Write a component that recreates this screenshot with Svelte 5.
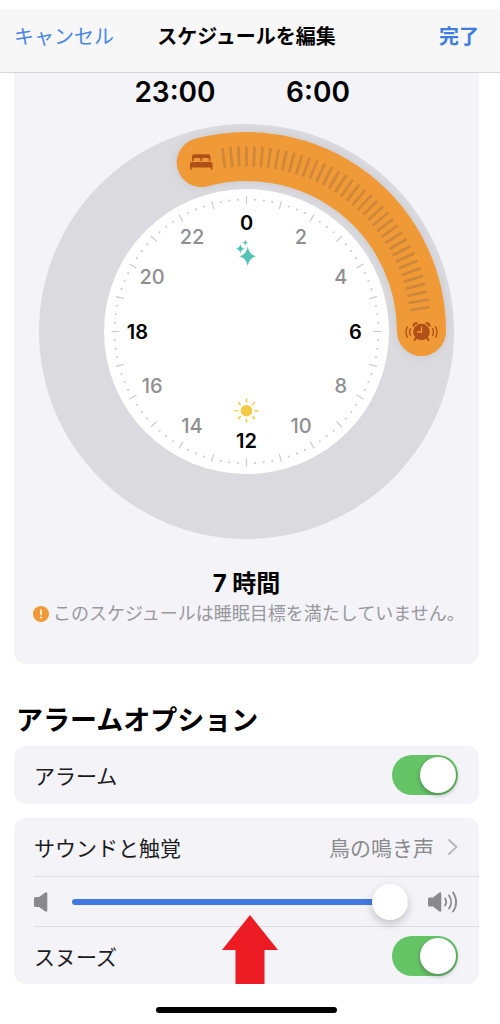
<script lang="ts">
  const C = 207.5;

  function polar(r: number, deg: number) {
    const a = (deg * Math.PI) / 180;
    return { x: C + r * Math.sin(a), y: C - r * Math.cos(a) };
  }

  function tick(inner: number, outer: number, deg: number) {
    const a = polar(inner, deg);
    const b = polar(outer, deg);
    return { x1: a.x, y1: a.y, x2: b.x, y2: b.y };
  }

  function star(x: number, y: number, w: number, h: number) {
    const k = 0.17;
    return `M${x} ${y - h}Q${x + w * k} ${y - h * k} ${x + w} ${y}Q${x + w * k} ${y + h * k} ${x} ${y + h}Q${x - w * k} ${y + h * k} ${x - w} ${y}Q${x - w * k} ${y - h * k} ${x} ${y - h}Z`;
  }

  const hours = Array.from({ length: 12 }, (_, i) => ({ value: i * 2, ...polar(109, i * 30) }));
  const marks = Array.from({ length: 24 }, (_, i) => tick(127, 135, i * 15));
  const dots = Array.from({ length: 96 }, (_, i) => i)
    .filter((i) => i % 4 !== 0)
    .map((i) => polar(132, i * 3.75));
  const grip = Array.from({ length: 37 }, (_, i) => tick(166, 184, -7.5 + i * 2.5));
  const rays = Array.from({ length: 8 }, (_, i) => i * 45);

  const from = polar(175, -15);
  const to = polar(175, 90);

  let alarm = $state(true);
  let snooze = $state(true);
  let volume = $state(100);
</script>

<header class="bar">
  <button class="link">キャンセル</button>
  <h1>スケジュールを編集</h1>
  <button class="link done">完了</button>
</header>

<main>
  <section class="schedule">
    <div class="times">
      <time>23:00</time>
      <time>6:00</time>
    </div>

    <svg class="dial" viewBox="0 0 415 415" role="img" aria-label="23:00 – 6:00">
      <circle cx={C} cy={C} r="207.5" fill="#dadadf" />
      <circle cx={C} cy={C} r="142.5" fill="#fff" />
      <path class="sleep" d="M{from.x} {from.y}A175 175 0 0 1 {to.x} {to.y}" />

      <g stroke="#d0873a" stroke-width="2.8" stroke-linecap="round">
        {#each grip as t}
          <line {...t} />
        {/each}
      </g>
      <g stroke="#cbcbcd" stroke-width="1.2">
        {#each marks as t}
          <line {...t} />
        {/each}
      </g>
      <g fill="#cfcfd2">
        {#each dots as d}
          <circle cx={d.x} cy={d.y} r="1.1" />
        {/each}
      </g>

      {#each hours as h}
        <text class="hour" class:main={h.value % 6 === 0} x={h.x} y={h.y + 7}>{h.value}</text>
      {/each}

      <!-- bed -->
      <g fill="#b04f16">
        <path d="M153 37v-4.500a2.200 2.200 0 0 1 2.200-2.200h14a2.200 2.200 0 0 1 2.200 2.200v4.500h-1.600v-1.600a1.300 1.300 0 0 0-1.300-1.300h-4.200a1.300 1.300 0 0 0-1.300 1.300v1.600h-1.600v-1.600a1.300 1.300 0 0 0-1.300-1.300h-4.200a1.300 1.300 0 0 0-1.300 1.300v1.600z" />
        <path d="M151 45.500v-5.500a2 2 0 0 1 2-2h18.500a2 2 0 0 1 2 2v5.500h-1.800v-2h-18.900v2z" />
      </g>

      <!-- alarm clock -->
      <g transform="translate(382.5 208)" fill="none" stroke="#b04f16" stroke-linecap="round">
        <circle r="8.300" fill="#b04f16" stroke="none" />
        <path d="M-8-6.200a3 3 0 0 1 3.200-2.600M8-6.200a3 3 0 0 0-3.200-2.600M-5.500 6.200l-1.500 1.800M5.500 6.200l1.500 1.800" stroke-width="2" />
        <path d="M0-5v5h-4" stroke="#f09a37" stroke-width="1.300" />
        <path d="M-11-3.500a7 7 0 0 0 0 7M11-3.500a7 7 0 0 1 0 7M-14-5.200a10 10 0 0 0 0 10.400M14-5.200a10 10 0 0 1 0 10.400" stroke-width="1.300" />
      </g>

      <!-- sparkles -->
      <path fill="#52c3b4" d={star(208.7, 132.3, 8.5, 9.5)} />
      <path fill="#52c3b4" d={star(201.3, 124.7, 4.5, 4.5)} />
      <path fill="#52c3b4" d={star(206.3, 118.7, 2.6, 2.6)} />

      <!-- sun -->
      <g transform="translate(207.5 286.7)">
        <circle r="5.800" fill="#f5ca45" />
        {#each rays as r}
          <line y1="-8.800" y2="-11.300" stroke="#f5ca45" stroke-width="1.600" stroke-linecap="round" transform="rotate({r})" />
        {/each}
      </g>
    </svg>

    <p class="total">7 時間</p>
    <p class="warning">
      <svg width="16" height="16" viewBox="0 0 16 16" aria-hidden="true">
        <circle cx="8" cy="8" r="8" fill="#f09a37" />
        <path d="M8 4v4.500" stroke="#fff" stroke-width="1.600" stroke-linecap="round" />
        <circle cx="8" cy="11.500" r="1" fill="#fff" />
      </svg>
      <span>このスケジュールは睡眠目標を満たしていません。</span>
    </p>
  </section>

  <h2>アラームオプション</h2>

  <section class="group">
    <label class="row">
      <span>アラーム</span>
      <input class="toggle" type="checkbox" role="switch" bind:checked={alarm} />
    </label>
  </section>

  <section class="group">
    <button class="row sound">
      <span>サウンドと触覚</span>
      <span class="value">鳥の鳴き声</span>
      <svg width="10" height="18" viewBox="0 0 10 18" fill="none" stroke="#b9b9be" stroke-width="2" stroke-linecap="round" stroke-linejoin="round" aria-hidden="true">
        <path d="M1 2l7.500 7L1 16" />
      </svg>
    </button>
    <div class="row volume">
      <svg width="14" height="20" viewBox="0 0 14 20" fill="#8a8a8e" aria-hidden="true">
        <path d="M1.500 5H5L11 .8q2.300-1.200 2.300 .8v16.800q0 2-2.300 .8L5 15H1.500Q0 15 0 13.500V6.500Q0 5 1.500 5z" />
      </svg>
      <input type="range" min="0" max="100" aria-label="音量" bind:value={volume} />
      <svg width="30" height="22" viewBox="0 0 30 22" aria-hidden="true">
        <path fill="#8a8a8e" d="M1.500 6.500H5L11 1.800q2.300-1.200 2.300 .8v16.800q0 2-2.300 .8L5 15.500H1.500Q0 15.500 0 14V8Q0 6.500 1.500 6.500z" />
        <path d="M17 7.500a6 6 0 0 1 0 7M21 4.500a11 11 0 0 1 0 13M25 1.500a16 16 0 0 1 0 19" fill="none" stroke="#8a8a8e" stroke-width="1.800" stroke-linecap="round" />
      </svg>
    </div>
    <label class="row">
      <span>スヌーズ</span>
      <input class="toggle" type="checkbox" role="switch" bind:checked={snooze} />
    </label>
    <svg class="pointer" width="56" height="69" viewBox="0 0 56 69" aria-hidden="true">
      <path d="M28 0l28 35H42.500v34h-29V35H0z" fill="#ed1c24" />
    </svg>
  </section>

  <div class="home"></div>
</main>

<style>
  :global(body) {
    background: #fff;
    color: #000;
    font-family: Inter, "Noto Sans CJK JP", sans-serif;
  }
  h1,
  h2,
  p {
    margin: 0;
  }
  button {
    padding: 0;
    border: none;
    background: none;
    font: inherit;
    cursor: pointer;
  }
  .bar {
    display: grid;
    grid-template-columns: 1fr auto 1fr;
    align-items: center;
    height: 52px;
    margin-top: 9px;
    padding: 0 21px 11px 14px;
    background: #f7f7f7;
    border-bottom: 1px solid #d6d6d8;
    font-size: 20px;
  }
  h1 {
    font-size: 20px;
    font-weight: 700;
  }
  .link {
    justify-self: start;
    color: #4a86e4;
  }
  .done {
    justify-self: end;
    color: #3f7de0;
    font-weight: 700;
  }
  main {
    padding: 0 21px 0 14px;
  }
  .schedule {
    padding: 3px 0 36px;
    background: #f3f3f8;
    border-radius: 0 0 12px 12px;
  }
  .times {
    display: flex;
    justify-content: center;
    font-size: 28px;
    font-weight: 600;
    line-height: 32px;
  }
  .times time {
    width: 143px;
    text-align: center;
  }
  .dial {
    display: block;
    margin: 16px 25px 0;
  }
  .sleep {
    fill: none;
    stroke: #f09a37;
    stroke-width: 49;
    stroke-linecap: round;
    filter: drop-shadow(0 0 4px rgba(0, 0, 0, 0.08));
  }
  .hour {
    font-size: 20px;
    font-weight: 500;
    text-anchor: middle;
    fill: #8f8f92;
  }
  .hour.main {
    font-weight: 600;
    fill: #000;
  }
  .total {
    margin-top: 29px;
    font-size: 24px;
    font-weight: 700;
    line-height: 32px;
    text-align: center;
  }
  .warning {
    display: flex;
    align-items: center;
    gap: 4px;
    padding-left: 19px;
    color: #98989d;
    font-size: 18px;
    line-height: 28px;
  }
  .warning svg {
    flex: none;
  }
  h2 {
    margin: 37px 2px 5px;
    font-size: 27px;
    font-weight: 700;
    line-height: 40px;
  }
  .group {
    position: relative;
    margin-bottom: 14px;
    padding-left: 20px;
    background: #f3f3f8;
    border-radius: 12px;
  }
  .row {
    display: flex;
    align-items: center;
    justify-content: space-between;
    box-sizing: border-box;
    width: 100%;
    height: 58px;
    padding-right: 21px;
    color: #1c1c1e;
    font-size: 21px;
  }
  .row + .row {
    border-top: 1px solid #dedee3;
  }
  .sound .value {
    margin: 0 14px 0 auto;
    color: #8a8a8e;
  }
  .volume {
    height: 50px;
  }
  .volume svg {
    flex: none;
  }
  .volume input {
    flex: 1;
    min-width: 0;
    height: 36px;
    margin: 0 20px 0 24px;
    appearance: none;
    background: none;
  }
  .volume input::-webkit-slider-runnable-track {
    height: 6px;
    border-radius: 3px;
    background: #4079e0;
  }
  .volume input::-webkit-slider-thumb {
    width: 36px;
    height: 36px;
    margin-top: -15px;
    appearance: none;
    border-radius: 50%;
    background: #fff;
    box-shadow: 0 4px 10px rgba(0, 0, 0, 0.2);
  }
  .toggle {
    flex: none;
    width: 66px;
    height: 40px;
    margin: 0;
    padding: 2px;
    box-sizing: border-box;
    appearance: none;
    border-radius: 20px;
    background: #e0e0e4;
    cursor: pointer;
  }
  .toggle::before {
    content: "";
    display: block;
    width: 36px;
    height: 36px;
    border-radius: 50%;
    background: #fff;
    box-shadow: 0 2px 5px rgba(0, 0, 0, 0.3);
  }
  .toggle:checked {
    background: #65c466;
  }
  .toggle:checked::before {
    margin-left: auto;
  }
  /* lies over the volume and snooze rows */
  .pointer {
    position: absolute;
    bottom: 0;
    left: 208px;
    pointer-events: none;
  }
  .home {
    width: 181px;
    height: 6px;
    margin: 23px auto 0;
    border-radius: 3px;
    background: #000;
  }
</style>
